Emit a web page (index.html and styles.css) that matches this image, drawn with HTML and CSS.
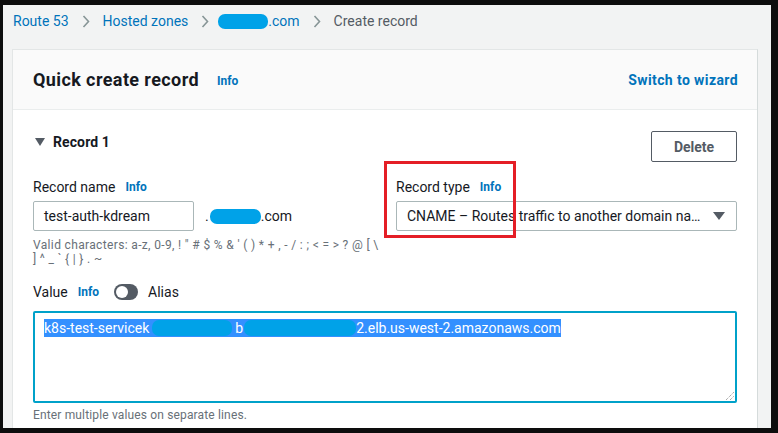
FILE: index.html
```html
<!DOCTYPE html>
<html lang="en">
<head>
<meta charset="utf-8">
<title>Create record</title>
<link rel="stylesheet" href="styles.css">
</head>
<body>
<div class="screen">
  <nav class="crumbs">
    <a class="crumb-link">Route 53</a>
    <svg class="chev" width="8" height="13" viewBox="0 0 8 13"><polyline points="1.5,1 6.5,6.5 1.5,12" fill="none" stroke="#879596" stroke-width="1.6"/></svg>
    <a class="crumb-link">Hosted zones</a>
    <svg class="chev" width="8" height="13" viewBox="0 0 8 13"><polyline points="1.5,1 6.5,6.5 1.5,12" fill="none" stroke="#879596" stroke-width="1.6"/></svg>
    <a class="crumb-link"><span class="blob blob-crumb"></span>.com</a>
    <svg class="chev" width="8" height="13" viewBox="0 0 8 13"><polyline points="1.5,1 6.5,6.5 1.5,12" fill="none" stroke="#879596" stroke-width="1.6"/></svg>
    <span class="crumb-current">Create record</span>
  </nav>

  <section class="card">
    <header class="card-head">
      <h2 class="card-title">Quick create record <a class="info info-title">Info</a></h2>
      <a class="wizard">Switch to wizard</a>
    </header>
    <div class="card-body">
      <div class="record-row">
        <div class="record-title">
          <svg width="10" height="8" viewBox="0 0 10 8"><polygon points="0,0 10,0 5,8" fill="#545b64"/></svg>
          <span>Record 1</span>
        </div>
        <button class="btn">Delete</button>
      </div>

      <div class="fields">
        <div class="field">
          <div class="label">Record name <a class="info">Info</a></div>
          <div class="name-row">
            <div class="input">test-auth-kdream</div>
            <div class="suffix">.<span class="blob blob-name"></span>.com</div>
          </div>
          <div class="hint hint-top">Valid characters: a-z, 0-9, ! " # $ % &amp; ' ( ) * + , - / : ; &lt; = &gt; ? @ [ \<br>] ^ _ ` { | } . ~</div>
        </div>
        <div class="field field-type">
          <div class="label">Record type <a class="info">Info</a></div>
          <div class="select">
            <span class="select-text">CNAME – Routes traffic to another domain name and to some AWS resources</span>
            <svg class="select-caret" width="12" height="8" viewBox="0 0 12 8"><polygon points="0,0 12,0 6,8" fill="#545b64"/></svg>
          </div>
          <div class="annot"></div>
        </div>
      </div>

      <div class="value-row">
        <span class="label-inline">Value</span>
        <a class="info">Info</a>
        <span class="toggle"><span class="knob"></span></span>
        <span class="label-inline">Alias</span>
      </div>
      <div class="textarea">
        <span class="sel">k8s-test-servicek<span class="blob blob-v1"></span>b<span class="blob blob-v2"></span>2.elb.us-west-2.amazonaws.com</span>
        <svg class="grip" width="9" height="9" viewBox="0 0 9 9"><line x1="1" y1="9" x2="9" y2="1" stroke="#888" stroke-width="1" stroke-dasharray="1 1"/><line x1="5" y1="9" x2="9" y2="5" stroke="#888" stroke-width="1" stroke-dasharray="1 1"/></svg>
      </div>
      <div class="hint hint-bottom">Enter multiple values on separate lines.</div>
    </div>
  </section>
</div>
</body>
</html>
```

FILE: styles.css
```css
html, body {
  margin: 0;
  padding: 0;
  background: #0d0d0d;
}
body {
  font-family: Roboto, "Liberation Sans", sans-serif;
  color: #16191f;
}
.screen {
  margin: 5px 7px 0 3px;
  height: 423px;
  background: #f2f3f3;
  overflow: hidden;
}
.crumbs {
  display: flex;
  align-items: center;
  padding: 6px 0 0 10px;
  height: 20px;
  font-size: 14px;
  line-height: 20px;
}
.crumb-link {
  color: #0073bb;
  display: flex;
  align-items: center;
}
.chev {
  margin: 0 13px;
  flex: none;
}
.crumb-current {
  color: #545b64;
}
.blob {
  display: inline-block;
  background: #00a2e8;
  border-radius: 7px;
}
.blob-crumb {
  width: 50px;
  height: 15px;
  margin-left: -4px;
}
.card {
  margin: 18px 13px 0 9px;
  background: #fff;
  border: 1px solid #e3e6e6;
  border-right-color: #d5dbdb;
  height: 400px;
}
.card-head {
  height: 59px;
  background: #fafafa;
  border-bottom: 1px solid #eaeded;
  display: flex;
  align-items: center;
  justify-content: space-between;
  padding: 0 19px 0 20px;
}
.card-title {
  margin: 0;
  font-size: 18px;
  font-weight: 700;
  letter-spacing: 0.4px;
  display: flex;
  align-items: center;
  line-height: 22px;
}
.info {
  color: #0073bb;
  font-size: 12px;
  font-weight: 700;
  letter-spacing: 0;
  margin-left: 10px;
}
.info-title {
  margin-left: 18px;
  position: relative;
  top: 1px;
}
.wizard {
  color: #0073bb;
  font-weight: 700;
  font-size: 14px;
  letter-spacing: 0.4px;
}
.card-body {
  padding: 21px 20px 0 20px;
}
.record-row {
  display: flex;
  justify-content: space-between;
  align-items: flex-start;
}
.record-title {
  display: flex;
  align-items: center;
  gap: 8px;
  font-size: 14px;
  font-weight: 700;
  line-height: 20px;
  padding-left: 2px;
  margin-top: 1px;
  letter-spacing: 0.1px;
}
.btn {
  height: 31px;
  padding: 0 20px;
  border: 1px solid #545b64;
  border-radius: 2px;
  background: #fff;
  color: #545b64;
  font-family: inherit;
  font-weight: 700;
  font-size: 14px;
  width: 86px;
}
.fields {
  display: grid;
  grid-template-columns: minmax(0, 1fr) minmax(0, 1fr);
  column-gap: 22px;
  margin-top: 15px;
}
.field {
  position: relative;
  min-width: 0;
}
.label {
  font-size: 14px;
  line-height: 20px;
  margin-bottom: 4px;
  display: flex;
  align-items: center;
}
.name-row {
  display: flex;
  align-items: center;
}
.input {
  box-sizing: border-box;
  width: 161px;
  height: 30px;
  border: 1px solid #aab7b8;
  border-radius: 2px;
  padding: 0 10px;
  font-size: 14px;
  line-height: 28px;
}
.suffix {
  margin-left: 11px;
  font-size: 14px;
  display: flex;
  align-items: center;
}
.blob-name {
  width: 51px;
  height: 15px;
  margin-left: 1px;
}
.hint {
  font-size: 12px;
  line-height: 14px;
  color: #687078;
  white-space: nowrap;
}
.hint-top {
  margin-top: 7px;
  letter-spacing: 0.35px;
}
.select {
  box-sizing: border-box;
  height: 30px;
  border: 1px solid #aab7b8;
  border-radius: 2px;
  padding: 0 11px 0 10px;
  display: flex;
  align-items: center;
  font-size: 14px;
}
.select-text {
  flex: 1;
  min-width: 0;
  white-space: nowrap;
  overflow: hidden;
  text-overflow: ellipsis;
}
.select-caret {
  margin-left: 10px;
  flex: none;
}
.annot {
  position: absolute;
  left: -12px;
  top: -16px;
  width: 126px;
  height: 71px;
  border: 3px solid #e41e26;
}
.value-row {
  margin-top: 16px;
  display: flex;
  align-items: center;
  height: 20px;
  font-size: 14px;
}
.value-row .info {
  margin-left: 10px;
}
.toggle {
  width: 24px;
  height: 16px;
  border-radius: 8px;
  background: #545b64;
  margin: 0 10px 0 15px;
  display: flex;
  align-items: center;
  padding-left: 2px;
  box-sizing: border-box;
}
.knob {
  width: 12px;
  height: 12px;
  border-radius: 50%;
  background: #fff;
}
.textarea {
  position: relative;
  box-sizing: border-box;
  margin-top: 9px;
  height: 92px;
  border: 2px solid #00a1c9;
  border-radius: 2px;
  padding: 5px 9px;
}
.sel {
  display: inline-flex;
  align-items: center;
  background: #3390ff;
  color: #fff;
  font-size: 14px;
  line-height: 18px;
  white-space: nowrap;
}
.blob-v1 {
  width: 80px;
  height: 16px;
  margin: 0 3px 0 3px;
}
.blob-v2 {
  width: 112px;
  height: 16px;
  margin-left: 1px;
}
.grip {
  position: absolute;
  right: 1px;
  bottom: 1px;
}
.hint-bottom {
  margin-top: 5px;
  letter-spacing: 0.15px;
}
```
